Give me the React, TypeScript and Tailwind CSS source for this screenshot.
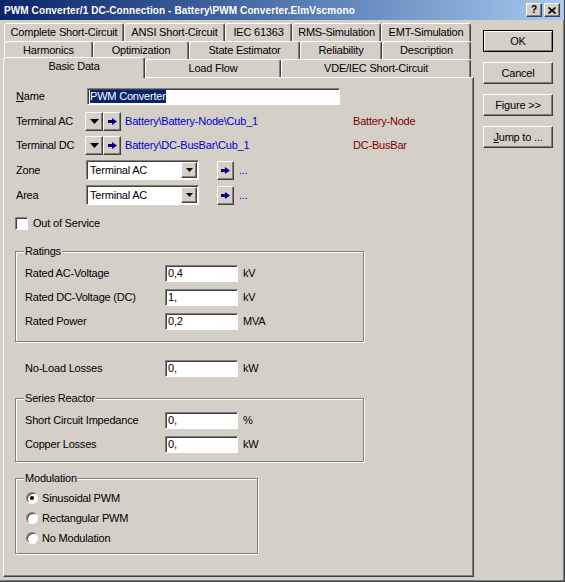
import React from 'react';

const raised = 'border border-t-white border-l-white border-r-[#404040] border-b-[#404040] shadow-[inset_-1px_-1px_#808080] bg-[#d4d0c8]';
const sunken = 'border border-t-[#808080] border-l-[#808080] border-r-white border-b-white shadow-[inset_1px_1px_#404040] bg-white';
const etched = 'border border-[#808080] shadow-[1px_1px_0_#fff,inset_1px_1px_0_#fff]';

function Tab({ label, w, h = 'h-[18px]' }: { label: string; w: string; h?: string }) {
  return (
    <div className={`${w} ${h} flex shrink-0 items-center justify-center rounded-t-[3px] border-t border-l border-r border-t-white border-l-white border-r-[#404040] shadow-[inset_-1px_0_#808080]`}>
      {label}
    </div>
  );
}

function Arrow() {
  return (
    <svg width="9" height="7" viewBox="0 0 9 7">
      <path d="M0 2h4V0l5 3.5L4 7V5H0z" fill="#000080" />
    </svg>
  );
}

function Down({ big = false }: { big?: boolean }) {
  return big ? (
    <svg width="9" height="5" viewBox="0 0 9 5"><path d="M0 0h9L4.5 5z" fill="#000" /></svg>
  ) : (
    <svg width="7" height="4" viewBox="0 0 7 4"><path d="M0 0h7L3.5 4z" fill="#000" /></svg>
  );
}

function Combo({ value }: { value: string }) {
  return (
    <div className={`${sunken} flex h-[20px] w-[113px] items-center justify-between pl-[3px] pr-[1px]`}>
      <span>{value}</span>
      <div className={`${raised} flex h-[16px] w-[16px] items-center justify-center`}>
        <Down />
      </div>
    </div>
  );
}

function Field({ label, value, unit }: { label: string; value: string; unit: string }) {
  return (
    <div className="flex h-[17px] items-center">
      <span className="w-[140px]">{label}</span>
      <div className={`${sunken} flex h-[17px] w-[73px] items-center pl-[2px]`}>{value}</div>
      <span className="ml-[5px]">{unit}</span>
    </div>
  );
}

function Radio({ label, checked = false }: { label: string; checked?: boolean }) {
  return (
    <div className="flex h-[20px] items-center">
      <div className="flex h-[12px] w-[12px] items-center justify-center rounded-full border border-t-[#808080] border-l-[#808080] border-r-white border-b-white bg-white shadow-[inset_1px_1px_#404040]">
        {checked && <div className="h-[4px] w-[4px] rounded-full bg-black" />}
      </div>
      <span className="ml-[4px]">{label}</span>
    </div>
  );
}

function Button({ children, primary = false }: { children: React.ReactNode; primary?: boolean }) {
  const cls = primary
    ? 'border border-black bg-[#d4d0c8] shadow-[inset_1px_1px_#fff,inset_-1px_-1px_#808080]'
    : raised;
  return <div className={`${cls} flex h-[22px] w-[70px] items-center justify-center`}>{children}</div>;
}

export default function App() {
  return (
    <div className="h-[582px] w-[565px] overflow-hidden border-r border-b border-r-[#404040] border-b-[#404040] bg-[#d4d0c8] font-['Liberation_Sans',Arial,sans-serif] text-[11px] leading-[13px] tracking-[-0.2px] text-black shadow-[inset_-1px_-1px_#808080]">
      {/* title bar */}
      <div className="flex h-[20px] items-center justify-between bg-linear-to-r from-[#0a246a] to-[#a6caf0] pr-[4px] pl-[4px]">
        <span className="text-[10px] font-bold tracking-[0.1px] text-white">PWM Converter/1 DC-Connection - Battery\PWM Converter.ElmVscmono</span>
        <div className="flex gap-[2px]">
          <div className={`${raised} flex h-[14px] w-[16px] items-center justify-center text-[10px] leading-none font-bold`}>?</div>
          <div className={`${raised} flex h-[14px] w-[16px] items-center justify-center`}>
            <svg width="8" height="7" viewBox="0 0 8 7">
              <path d="M0.5 0.5l7 6M7.5 0.5l-7 6" stroke="#000" strokeWidth="1.6" />
            </svg>
          </div>
        </div>
      </div>

      <div className="flex">
        {/* left: tabs + page */}
        <div className="mt-[3px] ml-[3px] w-[471px]">
          <div className="flex pl-[1px]">
            <Tab label="Complete Short-Circuit" w="w-[120px]" />
            <Tab label="ANSI Short-Circuit" w="w-[101px]" />
            <Tab label="IEC 61363" w="w-[67px]" />
            <Tab label="RMS-Simulation" w="w-[89px]" />
            <Tab label="EMT-Simulation" w="w-[90px]" />
          </div>
          <div className="flex pl-[1px]">
            <Tab label="Harmonics" w="w-[89px]" />
            <Tab label="Optimization" w="w-[96px]" />
            <Tab label="State Estimator" w="w-[111px]" />
            <Tab label="Reliability" w="w-[82px]" />
            <Tab label="Description" w="w-[89px]" />
          </div>
          <div className="-mt-[2px] flex h-[20px] items-end">
            <div className="relative z-10 -mb-[1px] flex h-[21px] w-[142px] shrink-0 items-center justify-center rounded-t-[3px] border-t border-l border-r border-t-white border-l-white border-r-[#404040] bg-[#d4d0c8] pb-[3px] shadow-[inset_-1px_0_#808080]">
              Basic Data
            </div>
            <Tab label="Load Flow" w="w-[136px]" />
            <Tab label="VDE/IEC Short-Circuit" w="w-[190px]" />
          </div>

          {/* page */}
          <div className="h-[500px] border border-t-white border-l-white border-r-[#404040] border-b-[#404040] pt-[10px] pl-[12px] shadow-[inset_-1px_-1px_#808080]">
            <div className="flex h-[17px] items-center">
              <span className="w-[71px]"><span className="underline">N</span>ame</span>
              <div className={`${sunken} flex h-[17px] w-[253px] items-center pl-[2px]`}>
                <span className="bg-[#0a246a] text-white">PWM Converter</span>
              </div>
            </div>

            <div className="mt-[7px] flex h-[19px] items-center">
              <span className="w-[69px]">Terminal AC</span>
              <div className={`${raised} flex h-[19px] w-[18px] items-center justify-center`}><Down big /></div>
              <div className={`${raised} flex h-[19px] w-[18px] items-center justify-center`}><Arrow /></div>
              <span className="ml-[4px] w-[228px] text-[#0000cc]">Battery\Battery-Node\Cub_1</span>
              <span className="text-[#800000]">Battery-Node</span>
            </div>

            <div className="mt-[5px] flex h-[19px] items-center">
              <span className="w-[69px]">Terminal DC</span>
              <div className={`${raised} flex h-[19px] w-[18px] items-center justify-center`}><Down big /></div>
              <div className={`${raised} flex h-[19px] w-[18px] items-center justify-center`}><Arrow /></div>
              <span className="ml-[4px] w-[228px] text-[#0000cc]">Battery\DC-BusBar\Cub_1</span>
              <span className="text-[#800000]">DC-BusBar</span>
            </div>

            {['Zone', 'Area'].map((l) => (
              <div key={l} className="mt-[5px] flex h-[20px] items-center">
                <span className="w-[70px]">{l}</span>
                <Combo value="Terminal AC" />
                <div className={`${raised} ml-[18px] flex h-[19px] w-[17px] items-center justify-center`}><Arrow /></div>
                <span className="ml-[5px] text-[#0000cc]">...</span>
              </div>
            ))}

            <div className="mt-[12px] -ml-[1px] flex h-[13px] items-center">
              <div className={`${sunken} h-[13px] w-[13px]`} />
              <span className="ml-[5px]">Out of Service</span>
            </div>

            <fieldset className={`${etched} mt-[15px] -ml-[1px] w-[349px] p-0`}>
              <legend className="ml-[8px] bg-[#d4d0c8] px-[1px]">Ratings</legend>
              <div className="flex flex-col gap-[7px] pt-[7px] pb-[11px] pl-[9px]">
                <Field label="Rated AC-Voltage" value="0,4" unit="kV" />
                <Field label="Rated DC-Voltage (DC)" value="1," unit="kV" />
                <Field label="Rated Power" value="0,2" unit="MVA" />
              </div>
            </fieldset>

            <div className="mt-[18px] pl-[9px]">
              <Field label="No-Load Losses" value="0," unit="kW" />
            </div>

            <fieldset className={`${etched} mt-[15px] -ml-[1px] w-[349px] p-0`}>
              <legend className="ml-[8px] bg-[#d4d0c8] px-[1px]">Series Reactor</legend>
              <div className="flex flex-col gap-[7px] pt-[7px] pb-[8px] pl-[9px]">
                <Field label="Short Circuit Impedance" value="0," unit="%" />
                <Field label="Copper Losses" value="0," unit="kW" />
              </div>
            </fieldset>

            <fieldset className={`${etched} mt-[10px] -ml-[1px] w-[243px] p-0`}>
              <legend className="ml-[8px] bg-[#d4d0c8] px-[1px]">Modulation</legend>
              <div className="pt-[3px] pb-[5px] pl-[10px]">
                <Radio label="Sinusoidal PWM" checked />
                <Radio label="Rectangular PWM" />
                <Radio label="No Modulation" />
              </div>
            </fieldset>
          </div>
        </div>

        {/* right: buttons */}
        <div className="mt-[10px] ml-[9px] flex flex-col gap-[10px]">
          <Button primary>OK</Button>
          <Button>Cancel</Button>
          <Button>Figure &gt;&gt;</Button>
          <Button><span><span className="underline">J</span>ump to ...</span></Button>
        </div>
      </div>
    </div>
  );
}
